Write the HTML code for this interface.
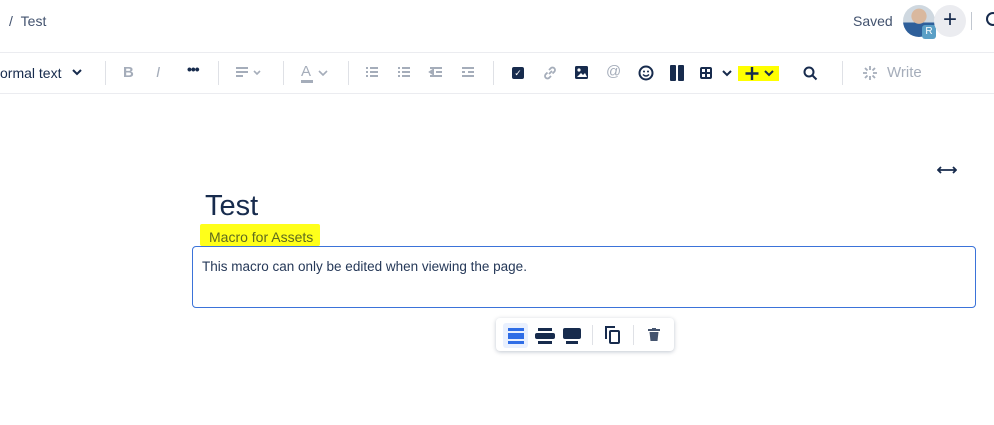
<!DOCTYPE html>
<html><head><meta charset="utf-8"><style>
*{margin:0;padding:0;box-sizing:border-box}
body{width:994px;height:425px;background:#fff;font-family:"Liberation Sans",sans-serif;color:#172b4d;position:relative;overflow:hidden}
.a{position:absolute}
.t{font-size:14px}
.g{color:#a5adba}
.sep{position:absolute;top:61px;width:1px;height:24px;background:#dfe1e6}
</style></head><body>
<div class="a t" style="left:9px;top:13px;color:#42526e">/&nbsp;&nbsp;Test</div>
<div class="a t" style="left:853px;top:13px;color:#42526e">Saved</div>
<div class="a" style="left:903px;top:5px;width:32px;height:32px;border-radius:50%;background:radial-gradient(circle at 50% 35%,#d9b89e 0 28%,transparent 30%),linear-gradient(#cfd8e0 55%,#2e5f9a 55%)"></div>
<div class="a" style="left:922px;top:25px;width:14px;height:14px;border-radius:3px;background:#5a9fc6;color:#fff;font-size:10px;text-align:center;line-height:14px">R</div>
<div class="a" style="left:934px;top:5px;width:32px;height:32px;border-radius:50%;background:#ebecf0;font-size:24px;text-align:center;line-height:30px">+</div>
<div class="a" style="left:971px;top:12px;width:1px;height:18px;background:#c1c7d0"></div>
<div class="a" style="left:986px;top:12px;width:14px;height:14px;border-radius:50%;border:2px solid #172b4d"></div>
<div class="a" style="left:0;top:52px;width:994px;height:1px;background:#ebecf0"></div>
<div class="a" style="left:0;top:93px;width:994px;height:1px;background:#ebecf0"></div>
<div class="a t" style="left:0;top:65px">ormal text</div>
<svg class="a" style="left:72px;top:68px" width="10" height="8"><path d="M1 2l4 4 4-4" stroke="#172b4d" stroke-width="2" fill="none"/></svg>
<div class="sep" style="left:105px"></div>
<div class="a g" style="left:123px;top:64px;font-size:15px;font-weight:bold">B</div>
<div class="a g" style="left:156px;top:64px;font-size:15px;font-style:italic">I</div>
<div class="a" style="left:187px;top:61px;font-size:14px;font-weight:bold;letter-spacing:-1px">•••</div>
<div class="sep" style="left:218px"></div>
<svg class="a" style="left:236px;top:67px" width="30" height="12"><path d="M0 1h12M0 5h12M0 9h7" stroke="#a5adba" stroke-width="2"/><path d="M18 4l3 3 3-3" stroke="#a5adba" stroke-width="1.6" fill="none"/></svg>
<div class="sep" style="left:283px"></div>
<div class="a g" style="left:301px;top:63px;font-size:15px">A</div>
<div class="a" style="left:301px;top:80px;width:12px;height:3px;background:#a5adba"></div>
<svg class="a" style="left:318px;top:70px" width="10" height="6"><path d="M1 1l4 4 4-4" stroke="#a5adba" stroke-width="1.6" fill="none"/></svg>
<div class="sep" style="left:348px"></div>
<svg class="a" style="left:366px;top:67px" width="120" height="12"><g stroke="#a5adba" stroke-width="2"><path d="M0 1h2M4 1h8M0 5h2M4 5h8M0 9h2M4 9h8"/><path d="M32 1h2M36 1h8M32 5h2M36 5h8M32 9h2M36 9h8"/><path d="M64 1h12M70 5h6M64 9h12M64 5l3-2v4z"/><path d="M96 1h12M102 5h6M96 9h12M96 5h3"/></g></svg>
<div class="sep" style="left:493px"></div>
<div class="a" style="left:512px;top:67px;width:12px;height:12px;background:#172b4d;border-radius:2px;color:#fff;font-size:9px;text-align:center;line-height:12px">✓</div>
<svg class="a" style="left:543px;top:66px" width="14" height="14"><path d="M6 8l3-3M4.5 6.5l-2 2a2.5 2.5 0 003.5 3.5l2-2M9.5 7.5l2-2a2.5 2.5 0 00-3.5-3.5l-2 2" stroke="#a5adba" stroke-width="1.8" fill="none"/></svg>
<svg class="a" style="left:575px;top:66px" width="14" height="14"><rect width="13" height="13" rx="1.5" fill="#172b4d"/><circle cx="4" cy="4" r="1.6" fill="#fff"/><path d="M2 11l4-4 2 2 2-2 2 4z" fill="#fff"/></svg>
<div class="a g" style="left:606px;top:63px;font-size:15px">@</div>
<svg class="a" style="left:638px;top:65px" width="16" height="16"><circle cx="8" cy="8" r="6.5" stroke="#172b4d" stroke-width="2" fill="none"/><circle cx="6" cy="6.5" r="1" fill="#172b4d"/><circle cx="10" cy="6.5" r="1" fill="#172b4d"/><path d="M5 9.5q3 3 6 0" stroke="#172b4d" stroke-width="1.5" fill="none"/></svg>
<div class="a" style="left:670px;top:65px;width:6px;height:16px;background:#172b4d;border-radius:1px"></div>
<div class="a" style="left:678px;top:65px;width:6px;height:16px;background:#172b4d;border-radius:1px"></div>
<div class="a" style="left:700px;top:67px;width:12px;height:12px;border:2px solid #172b4d;border-radius:2px;background:linear-gradient(#172b4d,#172b4d) 50% 0/2px 100% no-repeat,linear-gradient(#172b4d,#172b4d) 0 50%/100% 2px no-repeat"></div>
<svg class="a" style="left:722px;top:69px" width="10" height="8"><path d="M1 2l4 4 4-4" stroke="#172b4d" stroke-width="2" fill="none"/></svg>
<div class="a" style="left:738px;top:66px;width:41px;height:15px;background:#ffff00"></div>
<svg class="a" style="left:744px;top:65px" width="36" height="16"><path d="M8 2v13M1.5 8.5h13" stroke="#172b4d" stroke-width="2.4"/><path d="M21 6l4 4 4-4" stroke="#172b4d" stroke-width="2" fill="none"/></svg>
<svg class="a" style="left:803px;top:66px" width="15" height="15"><circle cx="6" cy="6" r="4.5" stroke="#172b4d" stroke-width="2" fill="none"/><path d="M9.5 9.5l4 4" stroke="#172b4d" stroke-width="2"/></svg>
<div class="sep" style="left:842px"></div>
<svg class="a" style="left:862px;top:65px" width="16" height="16"><g stroke="#a5adba" stroke-width="1.8"><path d="M8 1v4M8 11v4M1 8h4M11 8h4M3 3l2.5 2.5M10.5 10.5L13 13M13 3l-2.5 2.5M5.5 10.5L3 13"/></g></svg>
<div class="a g" style="left:887px;top:64px;font-size:15px">Write</div>
<svg class="a" style="left:937px;top:165px" width="20" height="10"><path d="M1 5h18M4 2L1 5l3 3M16 2l3 3-3 3" stroke="#172b4d" stroke-width="1.8" fill="none"/></svg>
<div class="a" style="left:205px;top:190px;font-size:29px">Test</div>
<div class="a" style="left:200px;top:224px;width:120px;height:22px;background:#ffff1a;border-radius:2px"></div>
<div class="a t" style="left:209px;top:229px;color:#5e6a1f">Macro for Assets</div>
<div class="a" style="left:192px;top:246px;width:784px;height:62px;border:1px solid #3b73d9;border-radius:4px"></div>
<div class="a" style="left:202px;top:259px;font-size:13.5px;color:#253858">This macro can only be edited when viewing the page.</div>
<div class="a" style="left:496px;top:318px;width:178px;height:33px;background:#fff;border-radius:4px;box-shadow:0 1px 4px rgba(9,30,66,.25)"></div>
<div class="a" style="left:503px;top:323px;width:25px;height:25px;background:#e9f0fe;border-radius:3px"></div>
<div class="a" style="left:508px;top:328px;width:16px;height:3px;background:#2f6de6"></div>
<div class="a" style="left:508px;top:333px;width:16px;height:6px;background:#2f6de6"></div>
<div class="a" style="left:508px;top:341px;width:16px;height:3px;background:#2f6de6"></div>
<div class="a" style="left:538px;top:328px;width:14px;height:3px;background:#172b4d"></div>
<div class="a" style="left:535px;top:333px;width:20px;height:6px;background:#172b4d;border-radius:2px"></div>
<div class="a" style="left:538px;top:341px;width:14px;height:3px;background:#172b4d"></div>
<div class="a" style="left:563px;top:328px;width:18px;height:11px;background:#172b4d;border-radius:2px"></div>
<div class="a" style="left:566px;top:341px;width:12px;height:3px;background:#172b4d"></div>
<div class="a" style="left:592px;top:325px;width:1px;height:20px;background:#dfe1e6"></div>
<svg class="a" style="left:604px;top:325px" width="18" height="20"><path d="M2 14V2h9" stroke="#172b4d" stroke-width="2" fill="none"/><rect x="6" y="6" width="9" height="12" rx="1" stroke="#172b4d" stroke-width="2" fill="none"/></svg>
<div class="a" style="left:633px;top:325px;width:1px;height:20px;background:#dfe1e6"></div>
<svg class="a" style="left:647px;top:328px" width="14" height="14"><path d="M1 2h12M5 1h4" stroke="#44546f" stroke-width="2"/><path d="M2.5 4h9l-1 9h-7z" fill="#44546f"/></svg>
</body></html>
